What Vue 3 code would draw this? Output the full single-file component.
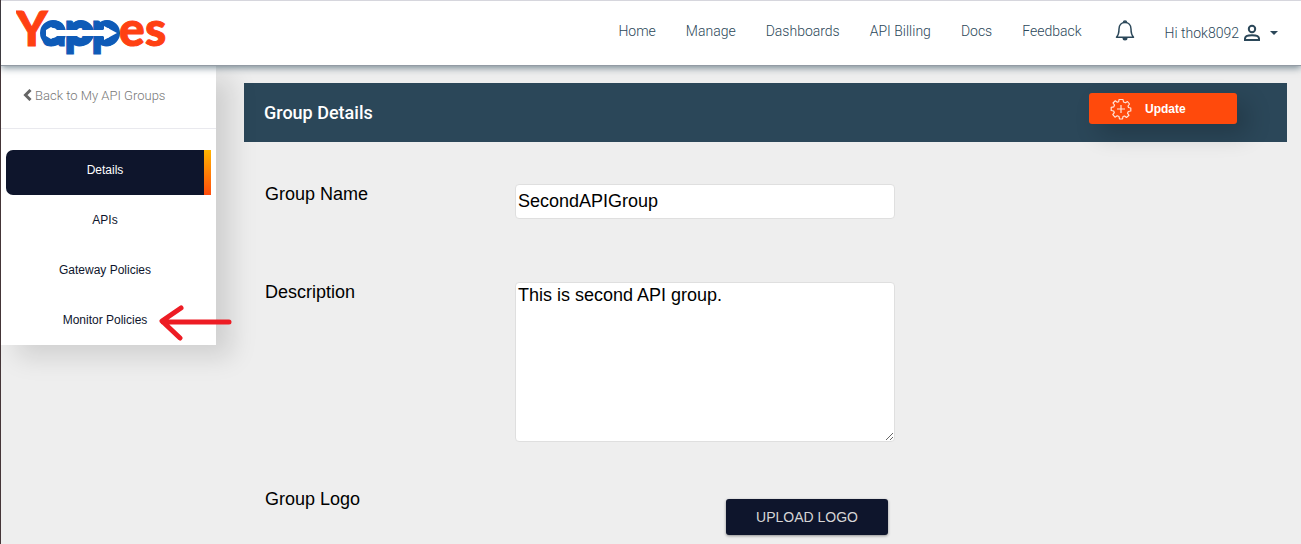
<script setup>
import { ref } from 'vue'

const links = ['Home', 'Manage', 'Dashboards', 'API Billing', 'Docs', 'Feedback']
const sections = ['Details', 'APIs', 'Gateway Policies', 'Monitor Policies']
const active = ref('Details')
const groupName = ref('SecondAPIGroup')
const description = ref('This is second API group.')
</script>

<template>
  <div class="page">
    <header class="topbar">
      <a class="brand" href="#" aria-label="Yappes home">
        <svg width="152" height="52" viewBox="0 0 152 52">
          <g fill="none" stroke="#0e5bb8" stroke-width="8">
            <circle cx="37" cy="27" r="9" />
            <circle cx="65" cy="27" r="9" />
            <circle cx="91" cy="27" r="9" />
          </g>
          <g font-family="Lato, sans-serif" font-weight="900" font-size="48" stroke-width="1">
            <text y="40" fill="#0e5bb8" stroke="#0e5bb8"><tspan x="26">a</tspan><tspan x="48">p</tspan><tspan x="75">p</tspan></text>
            <text x="0" y="40" fill="#ff4012" stroke="#ff4012">Y</text>
            <text y="40" fill="#ff4012" stroke="#ff4012"><tspan x="103">e</tspan><tspan x="129">s</tspan></text>
          </g>
          <path d="M35 21L40 24H88V20L101 27L88 34V30H40L35 33L30 30V24Z" fill="#fff" />
        </svg>
      </a>
      <nav class="nav" aria-label="Main">
        <a v-for="link in links" :key="link" href="#">{{ link }}</a>
      </nav>
      <button class="bell" type="button" aria-label="Notifications">
        <svg width="20" height="22" viewBox="0 0 20 22" fill="none" stroke="#2b4759" stroke-width="1.5">
          <path d="M1.5 17.2C3.5 15 4 13 4 9C4 5 6.500 2.500 10 2.500S16 5 16 9C16 13 16.500 15 18.500 17.200Z" stroke-linejoin="round" />
          <path d="M8.500 2.500a1.500 1.500 0 0 1 3 0" />
          <path d="M7.500 18a2.500 2.500 0 0 0 5 0Z" fill="#2b4759" stroke="none" />
        </svg>
      </button>
      <button class="user" type="button">
        <span>Hi thok8092</span>
        <svg width="18" height="18" viewBox="0 0 18 18" fill="none" stroke="#2b4759" stroke-width="2">
          <circle cx="9" cy="5" r="3.200" />
          <path d="M2 16V14.500C2 12.500 5 11.200 9 11.200S16 12.500 16 14.500V16Z" />
        </svg>
        <span class="caret"></span>
      </button>
    </header>

    <div class="body">
      <aside class="sidebar">
        <a class="back" href="#">
          <svg width="9" height="12" viewBox="0 0 9 12" fill="none" stroke="#666" stroke-width="3">
            <path d="M7.500 1L2.500 6L7.500 11" />
          </svg>
          Back to My API Groups
        </a>
        <nav class="menu" aria-label="Group">
          <button
            v-for="section in sections"
            :key="section"
            type="button"
            :class="{ active: active === section }"
            @click="active = section"
          >{{ section }}</button>
        </nav>
        <svg class="pointer" width="74" height="38" viewBox="0 0 74 38" fill="none" stroke="#ed1c24" stroke-width="5" stroke-linecap="round" stroke-linejoin="round">
          <path d="M71 19H5M23 5L4 18L22 35" />
        </svg>
      </aside>

      <main class="content">
        <div class="heading">
          <h1>Group Details</h1>
          <button class="update" type="button">
            <svg width="22" height="22" viewBox="0 0 22 22" fill="none" stroke="#ffe4da" stroke-width="1.200">
              <path d="M9 1.500H13L13.500 4L15.500 4.800L17.500 3.500L19.500 6L18 8L18.500 9.500L20.800 10V13L18.300 13.500L17.500 15.200L19 17.300L16.500 19.500L14.500 18L13 18.500L12.500 21H9.500L9 18.500L7.200 17.800L5 19.200L2.800 16.700L4.300 14.700L3.700 13L1.200 12.500V9.300L3.800 8.800L4.500 7L3 5L5.300 2.800L7.300 4.200L8.700 3.700Z" stroke-linejoin="round" />
              <path d="M11 7V15M7 11H15" />
            </svg>
            <span>Update</span>
          </button>
        </div>
        <form class="form" @submit.prevent>
          <div class="row">
            <label for="name">Group Name</label>
            <input id="name" v-model="groupName" type="text" />
          </div>
          <div class="row">
            <label for="description">Description</label>
            <textarea id="description" v-model="description" spellcheck="false"></textarea>
          </div>
          <div class="row">
            <span id="logo-label">Group Logo</span>
            <div class="upload-cell">
              <button class="upload" type="button" aria-describedby="logo-label">UPLOAD LOGO</button>
            </div>
          </div>
        </form>
      </main>
    </div>
  </div>
</template>

<style>
body {
  background: #eee;
  overflow: hidden;
}
</style>

<style scoped>
.page {
  min-height: 100vh;
  box-sizing: border-box;
  border-left: 1px solid #453638;
  font-family: "Liberation Sans", Arial, sans-serif;
}
.page * {
  box-sizing: border-box;
}
button {
  border: 0;
  padding: 0;
  background: none;
  font-family: inherit;
  cursor: pointer;
}
a {
  text-decoration: none;
}
.topbar {
  position: relative;
  z-index: 2;
  display: flex;
  align-items: center;
  height: 66px;
  padding: 0 23px 4px 15px;
  border-top: 1px solid #d6d6dd;
  border-bottom: 1px solid #939ba4;
  background: #fff;
  box-shadow: 0 2px 7px #2b475999;
  font-family: Roboto, sans-serif;
  font-size: 14px;
  font-weight: 300;
}
.brand {
  display: flex;
  padding-top: 2px;
}
.nav {
  display: flex;
  gap: 30px;
  margin-left: auto;
}
.nav a {
  color: #2b4759;
}
.bell {
  display: flex;
  margin: 0 30px 0 33px;
}
.user {
  display: flex;
  align-items: center;
  gap: 4px;
  padding-top: 3px;
  color: #2b4759;
  font-size: 14px;
  font-weight: 300;
}
.caret {
  margin-left: 5px;
  border: 4px solid transparent;
  border-top-color: #2b4759;
  border-bottom: 0;
}
.body {
  display: flex;
  align-items: flex-start;
}
.sidebar {
  position: relative;
  flex: 0 0 215px;
  background: #fff;
  box-shadow: 16px 12px 24px #00000020;
}
.back {
  display: flex;
  gap: 3px;
  align-items: center;
  height: 63px;
  padding: 0 22px 4px;
  border-bottom: 1px solid #e9e9ee;
  color: #777;
  font-family: Roboto, sans-serif;
  font-size: 13px;
  font-weight: 300;
}
.menu {
  display: flex;
  flex-direction: column;
  gap: 5px;
  padding: 21px 5px 0;
}
.menu button {
  height: 45px;
  padding: 0 7px 5px 0;
  color: #0e152c;
  font-size: 12px;
}
.menu .active {
  border-radius: 7px 0 0 7px;
  background: linear-gradient(#ffb400, #ff4c0c) right / 7px 100% no-repeat, #0e152c;
  color: #fff;
}
.pointer {
  position: absolute;
  right: -16px;
  bottom: 4px;
}
.content {
  flex: 1;
  padding: 17px 14px 0 28px;
}
.heading {
  display: flex;
  align-items: center;
  justify-content: space-between;
  height: 59px;
  padding: 0 50px 0 20px;
  background: #2b4759;
}
h1 {
  margin: 0;
  color: #fff;
  font-family: Roboto, sans-serif;
  font-size: 18px;
  font-weight: 500;
}
.update {
  display: flex;
  align-items: center;
  gap: 13px;
  width: 148px;
  height: 31px;
  margin-bottom: 8px;
  padding: 0 21px;
  border-radius: 3px;
  background: #ff4a0c;
  box-shadow: 10px 10px 24px #00000033;
  color: #fff;
  font-size: 12px;
  font-weight: 700;
}
.form {
  display: flex;
  flex-direction: column;
  gap: 47px;
  padding: 42px 0 0 21px;
  color: #000;
  font-size: 18px;
}
.row {
  display: grid;
  grid-template-columns: 250px 380px;
  align-items: start;
  min-height: 51px;
}
input,
textarea {
  width: 100%;
  margin: 0;
  padding: 2px;
  border: 1px solid #dfdfdf;
  border-radius: 4px;
  background: #fff;
  color: #000;
  font-family: inherit;
  font-size: 18px;
}
input {
  height: 35px;
}
textarea {
  display: block;
  height: 160px;
  line-height: 21px;
}
.upload-cell {
  display: flex;
  justify-content: flex-end;
  padding: 10px 7px 0 0;
}
.upload {
  width: 162px;
  height: 36px;
  border-radius: 3px;
  background: #0e152c;
  box-shadow: 0 1px 3px #00000066;
  color: #d6d6d6;
  font-size: 14px;
}
</style>
